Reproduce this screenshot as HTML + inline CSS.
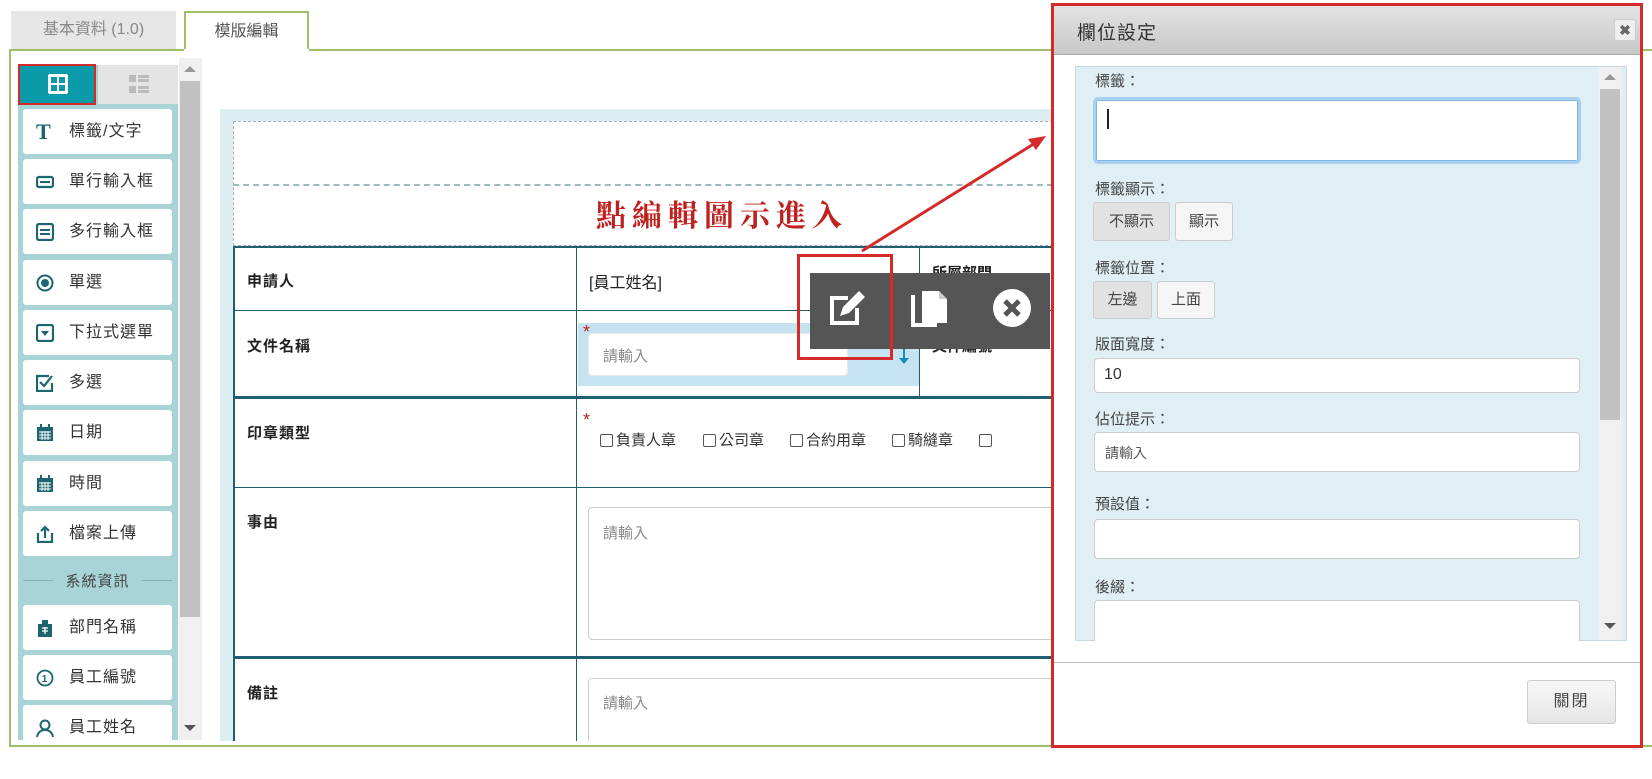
<!DOCTYPE html>
<html><head><meta charset="utf-8"><style>
*{box-sizing:border-box;margin:0;padding:0}
body{width:1652px;height:779px;background:#fff;position:relative;overflow:hidden;font-family:"Liberation Sans","Noto Sans CJK TC",sans-serif;color:#333}
.a{position:absolute}
.tab{position:absolute;top:11px;height:40px;font-size:16px;text-align:center;line-height:38px}
.item{position:absolute;left:23px;width:149px;height:45px;background:#fff;border-radius:3px;font-size:16px;line-height:45px;padding-left:46px;color:#333;letter-spacing:1px}
.item .ic{position:absolute;left:13px;top:14px;width:18px;height:18px}
.lbl{position:absolute;font-size:15px;font-weight:bold;color:#222;letter-spacing:1px}
.inp{position:absolute;background:#fff;border:1px solid #ccc;border-radius:4px}
.ph{color:#888;font-size:15px;position:absolute}
.flab{position:absolute;left:1095px;font-size:15px;color:#444}
.btn{position:absolute;border:1px solid #ccc;border-radius:3px;background:#f5f5f5;font-size:15px;text-align:center;color:#444}
.cb{display:inline-block;width:13px;height:13px;border:1px solid #555;border-radius:2px;vertical-align:-2px;margin-right:3px}
</style></head><body>
<!-- tabs -->
<div class="tab" style="left:11px;width:165px;background:#e6e6e6;color:#888">基本資料 (1.0)</div>
<div class="tab" style="left:184px;width:125px;border:2px solid #9dbf6a;border-bottom:none;background:#fff;color:#555;height:41px">模版編輯</div>
<div class="a" style="left:9px;top:49px;width:1650px;height:698px;border:2px solid #9dbf6a;border-right:none"></div>
<div class="a" style="left:184px;top:49px;width:125px;height:3px;background:#fff"></div>
<!-- left panel -->
<div class="a" style="left:18px;top:65px;width:160px;height:675px;background:#a8d3d7"></div>
<div class="a" style="left:98px;top:65px;width:80px;height:39px;background:#e4e4e4"></div>
<svg class="a" style="left:127px;top:73px" width="24" height="24" viewBox="0 0 24 24"><rect x="2" y="2" width="7" height="7" fill="#bbb"/><rect x="11" y="2" width="11" height="3" fill="#bbb"/><rect x="11" y="6" width="11" height="3" fill="#bbb"/><rect x="2" y="13" width="7" height="7" fill="#bbb"/><rect x="11" y="13" width="11" height="3" fill="#bbb"/><rect x="11" y="17" width="11" height="3" fill="#bbb"/></svg>
<div class="a" style="left:18px;top:64px;width:78px;height:41px;background:#0a9aa8;border:2px solid #d62a2a"></div>
<svg class="a" style="left:47px;top:73px" width="22" height="22" viewBox="0 0 22 22"><rect x="1" y="1" width="20" height="20" rx="2" fill="#fff"/><rect x="4" y="4" width="6" height="6" fill="#0a9aa8"/><rect x="12" y="4" width="6" height="6" fill="#0a9aa8"/><rect x="4" y="12" width="6" height="6" fill="#0a9aa8"/><rect x="12" y="12" width="6" height="6" fill="#0a9aa8"/></svg>
<!-- scrollbar -->
<div class="a" style="left:179px;top:58px;width:23px;height:682px;background:#f0f0f0"></div>
<div class="a" style="left:180px;top:81px;width:20px;height:536px;background:#c1c1c1"></div>
<div class="a" style="left:184px;top:66px;border-left:6px solid transparent;border-right:6px solid transparent;border-bottom:6px solid #999"></div>
<div class="a" style="left:184px;top:725px;border-left:6px solid transparent;border-right:6px solid transparent;border-top:6px solid #555"></div>

<div class="item" style="top:109px"><span class="a" style="left:13px;top:0;font-family:'Liberation Serif',serif;font-weight:bold;font-size:22px;color:#1d6670">T</span>標籤/文字</div>
<div class="item" style="top:159px"><svg class="ic" viewBox="0 0 18 18"><rect x="1" y="4" width="16" height="10" rx="2" fill="none" stroke="#1d6670" stroke-width="2.2"/><rect x="4" y="8" width="10" height="2" fill="#1d6670"/></svg>單行輸入框</div>
<div class="item" style="top:209px"><svg class="ic" viewBox="0 0 18 18"><rect x="1" y="1" width="16" height="16" rx="2" fill="none" stroke="#1d6670" stroke-width="2.2"/><rect x="4" y="6" width="10" height="2" fill="#1d6670"/><rect x="4" y="10" width="10" height="2" fill="#1d6670"/></svg>多行輸入框</div>
<div class="item" style="top:260px"><svg class="ic" viewBox="0 0 18 18"><circle cx="9" cy="9" r="7.5" fill="none" stroke="#1d6670" stroke-width="2"/><circle cx="9" cy="9" r="4" fill="#1d6670"/></svg>單選</div>
<div class="item" style="top:310px"><svg class="ic" viewBox="0 0 18 18"><rect x="1" y="1" width="16" height="16" rx="2" fill="none" stroke="#1d6670" stroke-width="2.2"/><path d="M5 7h8l-4 5z" fill="#1d6670"/></svg>下拉式選單</div>
<div class="item" style="top:360px"><svg class="ic" viewBox="0 0 18 18"><path d="M13 2H1v15h15V9" fill="none" stroke="#1d6670" stroke-width="2.2"/><path d="M4 8l4 4 8-10" fill="none" stroke="#1d6670" stroke-width="2.2"/></svg>多選</div>
<div class="item" style="top:410px"><svg class="ic" viewBox="0 0 18 18"><rect x="1" y="3" width="16" height="14" fill="#1d6670"/><rect x="4" y="0" width="2" height="4" fill="#1d6670"/><rect x="12" y="0" width="2" height="4" fill="#1d6670"/><path d="M3 8h12M3 11h12M3 14h12M6 7v9M9 7v9M12 7v9" stroke="#fff" stroke-width="1"/></svg>日期</div>
<div class="item" style="top:461px"><svg class="ic" viewBox="0 0 18 18"><rect x="1" y="3" width="16" height="14" fill="#1d6670"/><rect x="4" y="0" width="2" height="4" fill="#1d6670"/><rect x="12" y="0" width="2" height="4" fill="#1d6670"/><path d="M3 8h12M3 11h12M3 14h12M6 7v9M9 7v9M12 7v9" stroke="#fff" stroke-width="1"/></svg>時間</div>
<div class="item" style="top:511px"><svg class="ic" viewBox="0 0 18 18"><path d="M2 8v9h14V8" fill="none" stroke="#1d6670" stroke-width="2.2"/><path d="M9 13V2M5 6l4-4 4 4" fill="none" stroke="#1d6670" stroke-width="2.2"/></svg>檔案上傳</div>
<div class="a" style="left:23px;top:570px;width:149px;text-align:center;font-size:15px;color:#444;letter-spacing:1px">系統資訊</div>
<div class="a" style="left:23px;top:580px;width:30px;height:1px;background:#7fb5ba"></div>
<div class="a" style="left:142px;top:580px;width:30px;height:1px;background:#7fb5ba"></div>
<div class="item" style="top:605px"><svg class="ic" viewBox="0 0 18 18"><rect x="2" y="5" width="14" height="13" fill="#1d6670"/><rect x="6" y="1" width="6" height="5" fill="#1d6670"/><path d="M6 9h6M6 12h6M9 8v7" stroke="#fff" stroke-width="1.3"/></svg>部門名稱</div>
<div class="item" style="top:655px"><svg class="ic" viewBox="0 0 18 18"><circle cx="9" cy="9" r="7.5" fill="none" stroke="#1d6670" stroke-width="1.8"/><text x="9" y="13" font-size="10" text-anchor="middle" fill="#1d6670" font-family="Liberation Sans" font-weight="bold">1</text></svg>員工編號</div>
<div class="item" style="top:705px;height:35px;border-radius:3px 3px 0 0"><svg class="ic" viewBox="0 0 18 18"><circle cx="9" cy="6" r="4.5" fill="none" stroke="#1d6670" stroke-width="2"/><path d="M1 18c1-5 4-7 8-7s7 2 8 7" fill="none" stroke="#1d6670" stroke-width="2"/></svg>員工姓名</div>

<!-- canvas -->
<div class="a" style="left:220px;top:109px;width:840px;height:632px;background:#ddeef3;overflow:hidden">
<div class="a" style="left:13px;top:12px;width:830px;height:125px;background:#fff;border:1px dashed #aab;border-right:none"></div>
<div class="a" style="left:13px;top:75px;width:830px;height:0;border-top:2px dashed #9bb"></div>
<div class="a" style="left:376px;top:82px;font-family:'Noto Serif CJK SC','Liberation Serif',serif;font-weight:bold;font-size:30px;color:#c0201e;letter-spacing:6px;white-space:nowrap">點編輯圖示進入</div>
<div class="a" style="left:13px;top:137px;width:830px;height:500px;background:#fff;border-left:2px solid #1f5f70;border-top:2px solid #1f5f70"></div>
<div class="a" style="left:13px;top:201px;width:830px;height:1px;background:#1f5f70"></div>
<div class="a" style="left:13px;top:287px;width:830px;height:3px;background:#1f5f70"></div>
<div class="a" style="left:13px;top:378px;width:830px;height:1px;background:#1f5f70"></div>
<div class="a" style="left:13px;top:547px;width:830px;height:3px;background:#1f5f70"></div>
<div class="a" style="left:356px;top:137px;width:1px;height:500px;background:#1f5f70"></div>
<div class="a" style="left:699px;top:137px;width:1px;height:150px;background:#1f5f70"></div>
<div class="lbl" style="left:27px;top:161px">申請人</div>
<div class="lbl" style="left:27px;top:226px">文件名稱</div>
<div class="lbl" style="left:27px;top:313px">印章類型</div>
<div class="lbl" style="left:27px;top:402px">事由</div>
<div class="lbl" style="left:27px;top:573px">備註</div>
<div class="a" style="left:369px;top:160px;font-size:16px;color:#222">[員工姓名]</div>
<div class="a" style="left:712px;top:153px;font-size:15px;font-weight:bold;color:#222">所屬部門</div>
<div class="a" style="left:712px;top:226px;font-size:15px;font-weight:bold;color:#222">文件編號</div>
<div class="a" style="left:358px;top:214px;width:341px;height:63px;background:#c5e3f1"></div>
<div class="inp" style="left:368px;top:224px;width:260px;height:43px;border-color:#e8e8e8"></div>
<div class="ph" style="left:383px;top:236px">請輸入</div>
<div class="a" style="left:363px;top:213px;color:#c0201e;font-size:18px">*</div>
<div class="a" style="left:683px;top:237px;width:2px;height:14px;background:#1a8ac0"></div>
<div class="a" style="left:679px;top:249px;border-left:5px solid transparent;border-right:5px solid transparent;border-top:6px solid #1a8ac0"></div>
<div class="a" style="left:363px;top:301px;color:#c0201e;font-size:18px">*</div>
<div class="a" style="left:380px;top:320px;font-size:15px;color:#333;white-space:nowrap"><span class="cb"></span>負責人章<span style="display:inline-block;width:27px"></span><span class="cb"></span>公司章<span style="display:inline-block;width:26px"></span><span class="cb"></span>合約用章<span style="display:inline-block;width:26px"></span><span class="cb"></span>騎縫章<span style="display:inline-block;width:26px"></span><span class="cb"></span></div>
<div class="inp" style="left:368px;top:398px;width:480px;height:133px"></div>
<div class="ph" style="left:383px;top:413px">請輸入</div>
<div class="inp" style="left:368px;top:569px;width:480px;height:80px"></div>
<div class="ph" style="left:383px;top:583px">請輸入</div>
</div>
<!-- toolbar -->
<div class="a" style="left:810px;top:273px;width:240px;height:76px;background:#555"></div>
<svg class="a" style="left:826px;top:288px" width="46" height="40" viewBox="0 0 46 40"><path d="M22 10H6v25h25V20" fill="none" stroke="#fff" stroke-width="4"/><path d="M14 28l3-9 16-16 6 6-16 16z" fill="#fff"/></svg>
<svg class="a" style="left:910px;top:289px" width="44" height="40" viewBox="0 0 44 40"><path d="M3 6v30h24" fill="none" stroke="#fff" stroke-width="4"/><path d="M12 2h17l8 8v24H12z" fill="#fff"/><path d="M29 2v8h8" fill="#ccc"/></svg>
<svg class="a" style="left:989px;top:288px" width="46" height="40" viewBox="0 0 46 40"><circle cx="23" cy="20" r="19" fill="#fff"/><path d="M16 13l14 14M30 13L16 27" stroke="#555" stroke-width="5"/></svg>
<!-- red box + arrow -->
<div class="a" style="left:797px;top:254px;width:96px;height:106px;border:3px solid #d62a2a"></div>
<svg class="a" style="left:0;top:0" width="1652" height="779"><path d="M862 251L1040 140" stroke="#d62a2a" stroke-width="3"/><path d="M1046 136l-18 3 8 11z" fill="#d62a2a"/></svg>
<!-- dialog -->
<div class="a" style="left:1051px;top:3px;width:592px;height:745px;background:#fff;border:3px solid #d62a2a"></div>
<div class="a" style="left:1054px;top:6px;width:586px;height:49px;background:linear-gradient(#e3e3e3,#c8c8c8);border-bottom:1px solid #aaa"></div>
<div class="a" style="left:1077px;top:18px;font-size:19px;color:#333;letter-spacing:1px">欄位設定</div>
<div class="a" style="left:1614px;top:19px;width:22px;height:22px;background:#eee;border:1px solid #ccc;border-radius:3px;text-align:center;font-weight:bold;color:#666;font-size:14px;line-height:20px">✖</div>
<div class="a" style="left:1075px;top:66px;width:552px;height:575px;background:#e0eff4;border:1px solid #c8d8de"></div>
<div class="a" style="left:1599px;top:67px;width:22px;height:573px;background:#f0f0f0"></div>
<div class="a" style="left:1600px;top:89px;width:20px;height:331px;background:#c1c1c1"></div>
<div class="a" style="left:1604px;top:74px;border-left:6px solid transparent;border-right:6px solid transparent;border-bottom:6px solid #999"></div>
<div class="a" style="left:1604px;top:623px;border-left:6px solid transparent;border-right:6px solid transparent;border-top:6px solid #555"></div>
<div class="flab" style="top:70px">標籤：</div>
<div class="inp" style="left:1093px;top:97px;width:488px;height:67px;border:3px solid #a9d0f0;border-radius:5px;box-shadow:0 0 0 1px #7fb6e6 inset"></div>
<div class="a" style="left:1107px;top:109px;width:2px;height:20px;background:#222"></div>
<div class="flab" style="top:178px">標籤顯示：</div>
<div class="btn" style="left:1093px;top:202px;width:77px;height:39px;line-height:37px;background:#e2e2e2">不顯示</div>
<div class="btn" style="left:1175px;top:202px;width:58px;height:39px;line-height:37px">顯示</div>
<div class="flab" style="top:257px">標籤位置：</div>
<div class="btn" style="left:1093px;top:281px;width:59px;height:38px;line-height:36px;background:#e2e2e2">左邊</div>
<div class="btn" style="left:1157px;top:281px;width:58px;height:38px;line-height:36px">上面</div>
<div class="flab" style="top:333px">版面寬度：</div>
<div class="inp" style="left:1094px;top:358px;width:486px;height:35px"></div>
<div class="a" style="left:1104px;top:366px;font-size:16px;color:#333">10</div>
<div class="flab" style="top:408px">佔位提示：</div>
<div class="inp" style="left:1094px;top:432px;width:486px;height:40px"></div>
<div class="ph" style="left:1105px;top:443px;color:#555;font-size:14px">請輸入</div>
<div class="flab" style="top:493px">預設值：</div>
<div class="inp" style="left:1094px;top:519px;width:486px;height:40px"></div>
<div class="flab" style="top:576px">後綴：</div>
<div class="inp" style="left:1094px;top:600px;width:486px;height:41px;border-bottom:none;border-radius:4px 4px 0 0"></div>
<div class="a" style="left:1054px;top:662px;width:586px;height:1px;background:#bbb"></div>
<div class="btn" style="left:1527px;top:680px;width:89px;height:44px;line-height:42px;background:linear-gradient(#f7f7f7,#e6e6e6);font-size:16px;letter-spacing:2px">關閉</div>
</body></html>
